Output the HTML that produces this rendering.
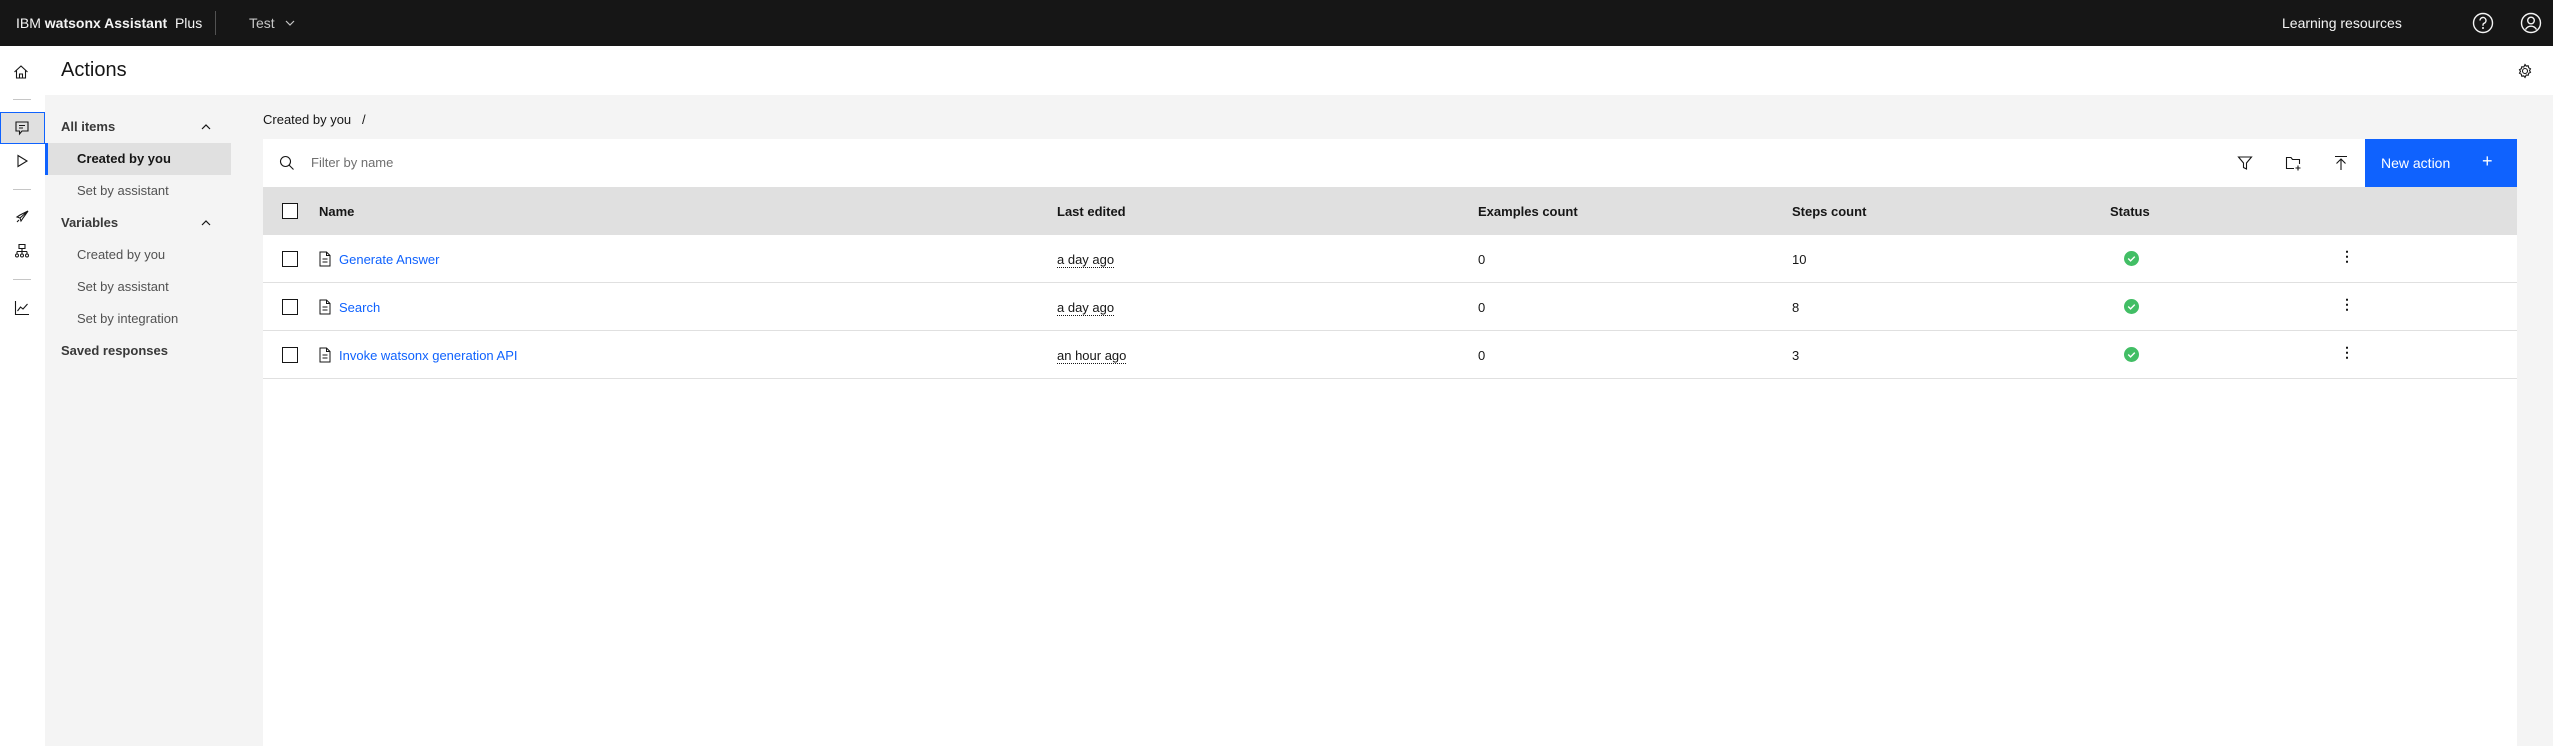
<!DOCTYPE html>
<html><head><meta charset="utf-8"><style>
*{box-sizing:border-box;margin:0;padding:0}
body{width:2553px;height:746px;overflow:hidden;background:#f4f4f4;font-family:"Liberation Sans",sans-serif;font-size:13px;color:#161616;position:relative}
.a{position:absolute}
.hdr{left:0;top:0;width:2553px;height:46px;background:#161616;color:#f4f4f4}
.rail{left:0;top:46px;width:45px;height:700px;background:#fff}
.tb{left:45px;top:46px;width:2508px;height:49px;background:#fff}
.nav div{position:absolute;white-space:nowrap}
.tbl{left:263px;top:139px;width:2254px;height:607px;background:#fff}
.th{top:48px;left:0;width:2254px;height:48px;background:#e0e0e0;font-weight:bold}
.row{left:0;width:2254px;height:48px;border-bottom:1px solid #e0e0e0}
.cb{width:16px;height:16px;border:1.5px solid #161616;background:#fff}
.lnk{color:#0f62fe}
.dt{border-bottom:1px dotted #161616}
svg{position:absolute}
</style></head><body>
<div class="a hdr">
 <div class="a" style="left:16px;top:15px;font-size:14px;white-space:nowrap">IBM <b>watsonx Assistant</b>&nbsp; Plus</div>
 <div class="a" style="left:215px;top:11px;width:1px;height:24px;background:#525252"></div>
 <div class="a" style="left:249px;top:15px;font-size:14px;color:#c6c6c6">Test</div>
 <svg style="left:284px;top:17px" width="12" height="12" viewBox="0 0 12 12"><path d="M2 4l4 4 4-4" fill="none" stroke="#c6c6c6" stroke-width="1.2"/></svg>
 <div class="a" style="left:2282px;top:15px;font-size:14px">Learning resources</div>
 <svg style="left:2472px;top:12px" width="22" height="22" viewBox="0 0 22 22"><circle cx="11" cy="11" r="9.5" fill="none" stroke="#f4f4f4" stroke-width="1.4"/><path d="M8 8.5a3 3 0 1 1 4 2.8c-.8.4-1 .9-1 1.7v.8" fill="none" stroke="#f4f4f4" stroke-width="1.4"/><circle cx="11" cy="16" r="1" fill="#f4f4f4"/></svg>
 <svg style="left:2520px;top:12px" width="22" height="22" viewBox="0 0 22 22"><circle cx="11" cy="11" r="9.5" fill="none" stroke="#f4f4f4" stroke-width="1.4"/><circle cx="11" cy="8.5" r="3.3" fill="none" stroke="#f4f4f4" stroke-width="1.4"/><path d="M5.5 17.5c1.5-2.5 3.3-3.3 5.5-3.3s4 .8 5.5 3.3" fill="none" stroke="#f4f4f4" stroke-width="1.4"/></svg>
</div>
<div class="a rail">
 <svg style="left:13px;top:18px" width="16" height="16" viewBox="0 0 16 16"><path d="M1.5 8L8 2l6.5 6M3.5 6.5V14h9V6.5M6.5 14V10h3v4" fill="none" stroke="#161616" stroke-width="1.1"/></svg>
 <div class="a" style="left:13px;top:53px;width:18px;height:1px;background:#c6c6c6"></div>
 <div class="a" style="left:0;top:66px;width:45px;height:32px;background:#e0e0e0;border:1.5px solid #0f62fe"></div>
 <svg style="left:14px;top:74px" width="16" height="16" viewBox="0 0 16 16"><path d="M2 2h12v9H8l-2.5 3V11H2z M5 5.5h6M5 8h4" fill="none" stroke="#161616" stroke-width="1.1"/></svg>
 <svg style="left:14px;top:107px" width="16" height="16" viewBox="0 0 16 16"><path d="M4 2.5v11L13 8z" fill="none" stroke="#161616" stroke-width="1.1"/></svg>
 <div class="a" style="left:13px;top:143px;width:18px;height:1px;background:#c6c6c6"></div>
 <svg style="left:14px;top:163px" width="16" height="16" viewBox="0 0 16 16"><path d="M14 2L6 6 3 8l3 1 1 3 2-3 5-7zM6 9l8-7M3 13l2-2" fill="none" stroke="#161616" stroke-width="1.1"/></svg>
 <svg style="left:14px;top:197px" width="16" height="16" viewBox="0 0 16 16"><path d="M5 1.5h6v4H5zM8 5.5v3M3 8.5h10M3 8.5v2M8 8.5v2M13 8.5v2" fill="none" stroke="#161616" stroke-width="1.1"/><circle cx="3" cy="12.5" r="1.5" fill="none" stroke="#161616"/><circle cx="8" cy="12.5" r="1.5" fill="none" stroke="#161616"/><circle cx="13" cy="12.5" r="1.5" fill="none" stroke="#161616"/></svg>
 <div class="a" style="left:13px;top:233px;width:18px;height:1px;background:#c6c6c6"></div>
 <svg style="left:14px;top:254px" width="16" height="16" viewBox="0 0 16 16"><path d="M1.5 1v13.5H15M3.5 11l3-4 2.5 2 4.5-5" fill="none" stroke="#161616" stroke-width="1.1"/></svg>
</div>
<div class="a tb">
 <div class="a" style="left:16px;top:13px;font-size:20px">Actions</div>
 <svg style="left:2472px;top:17px" width="16" height="16" viewBox="0 0 16 16"><circle cx="8" cy="8" r="2.5" fill="none" stroke="#161616" stroke-width="1.1"/><path d="M8 1.5l1.2 1.6 2-.3.5 2 1.8 1-1 1.7 1 1.8-1.8 1-.5 2-2-.3L8 14.5l-1.2-1.6-2 .3-.5-2-1.8-1 1-1.8-1-1.7 1.8-1 .5-2 2 .3z" fill="none" stroke="#161616" stroke-width="1.1"/></svg>
</div>
<div class="nav">
 <div style="left:61px;top:119px;font-weight:bold;color:#393939">All items</div>
 <svg style="left:200px;top:121px" width="12" height="12" viewBox="0 0 12 12"><path d="M2 8l4-4 4 4" fill="none" stroke="#161616" stroke-width="1.2"/></svg>
 <div style="left:45px;top:143px;width:186px;height:32px;background:#e0e0e0;border-left:3px solid #0f62fe"></div>
 <div style="left:77px;top:151px;font-weight:bold">Created by you</div>
 <div style="left:77px;top:183px;color:#525252">Set by assistant</div>
 <div style="left:61px;top:215px;font-weight:bold;color:#393939">Variables</div>
 <svg style="left:200px;top:217px" width="12" height="12" viewBox="0 0 12 12"><path d="M2 8l4-4 4 4" fill="none" stroke="#161616" stroke-width="1.2"/></svg>
 <div style="left:77px;top:247px;color:#525252">Created by you</div>
 <div style="left:77px;top:279px;color:#525252">Set by assistant</div>
 <div style="left:77px;top:311px;color:#525252">Set by integration</div>
 <div style="left:61px;top:343px;font-weight:bold;color:#393939">Saved responses</div>
</div>
<div class="a" style="left:263px;top:112px">Created by you&nbsp;&nbsp; /</div>
<div class="a tbl">
 <svg style="left:16px;top:16px" width="16" height="16" viewBox="0 0 16 16"><circle cx="6.5" cy="6.5" r="5" fill="none" stroke="#161616" stroke-width="1.1"/><path d="M10 10l4.5 4.5" stroke="#161616" stroke-width="1.1"/></svg>
 <div class="a" style="left:48px;top:16px;color:#6f6f6f">Filter by name</div>
 <svg style="left:1974px;top:16px" width="16" height="16" viewBox="0 0 16 16"><path d="M1.5 2h13L9.5 8v6l-3-1.5V8z" fill="none" stroke="#161616" stroke-width="1.1"/></svg>
 <svg style="left:2022px;top:16px" width="16" height="16" viewBox="0 0 16 16"><path d="M9 13.5H1.5V2.5h4.5l1.5 2H14.5V9M13 10.5v5M10.5 13h5" fill="none" stroke="#161616" stroke-width="1.1"/></svg>
 <svg style="left:2070px;top:16px" width="16" height="16" viewBox="0 0 16 16"><path d="M2 1.5h12M8 15V4M3.5 8.5L8 4l4.5 4.5" fill="none" stroke="#161616" stroke-width="1.1"/></svg>
 <div class="a" style="left:2102px;top:0;width:152px;height:48px;background:#0f62fe;color:#fff">
  <div class="a" style="left:16px;top:16px;font-size:14px">New action</div>
  <div class="a" style="left:117px;top:12px;font-size:18px">+</div>
 </div>
 <div class="a th">
  <div class="a cb" style="left:19px;top:16px"></div>
  <div class="a" style="left:56px;top:17px">Name</div>
  <div class="a" style="left:794px;top:17px">Last edited</div>
  <div class="a" style="left:1215px;top:17px">Examples count</div>
  <div class="a" style="left:1529px;top:17px">Steps count</div>
  <div class="a" style="left:1847px;top:17px">Status</div>
 </div>
 <div class="a row" style="top:96px"><div class="a cb" style="left:19px;top:16px"></div><svg style="left:56px;top:16px" width="12" height="16" viewBox="0 0 12 16"><path d="M1 1h6.5L11 4.5V15H1zM7.5 1v3.5H11M3.5 8h5M3.5 11h5" fill="none" stroke="#161616" stroke-width="1"/></svg><div class="a lnk" style="left:76px;top:17px">Generate Answer</div><div class="a" style="left:794px;top:17px"><span class="dt">a day ago</span></div><div class="a" style="left:1215px;top:17px">0</div><div class="a" style="left:1529px;top:17px">10</div><svg style="left:1861px;top:16px" width="15" height="15" viewBox="0 0 16 16"><circle cx="8" cy="8" r="8" fill="#42be65"/><path d="M4.5 8l2.5 2.5 4.5-4.5" fill="none" stroke="#fff" stroke-width="1.5"/></svg><div class="a" style="left:2077px;top:13px;font-weight:bold;font-size:14px">⋮</div></div>
 <div class="a row" style="top:144px"><div class="a cb" style="left:19px;top:16px"></div><svg style="left:56px;top:16px" width="12" height="16" viewBox="0 0 12 16"><path d="M1 1h6.5L11 4.5V15H1zM7.5 1v3.5H11M3.5 8h5M3.5 11h5" fill="none" stroke="#161616" stroke-width="1"/></svg><div class="a lnk" style="left:76px;top:17px">Search</div><div class="a" style="left:794px;top:17px"><span class="dt">a day ago</span></div><div class="a" style="left:1215px;top:17px">0</div><div class="a" style="left:1529px;top:17px">8</div><svg style="left:1861px;top:16px" width="15" height="15" viewBox="0 0 16 16"><circle cx="8" cy="8" r="8" fill="#42be65"/><path d="M4.5 8l2.5 2.5 4.5-4.5" fill="none" stroke="#fff" stroke-width="1.5"/></svg><div class="a" style="left:2077px;top:13px;font-weight:bold;font-size:14px">⋮</div></div>
 <div class="a row" style="top:192px"><div class="a cb" style="left:19px;top:16px"></div><svg style="left:56px;top:16px" width="12" height="16" viewBox="0 0 12 16"><path d="M1 1h6.5L11 4.5V15H1zM7.5 1v3.5H11M3.5 8h5M3.5 11h5" fill="none" stroke="#161616" stroke-width="1"/></svg><div class="a lnk" style="left:76px;top:17px">Invoke watsonx generation API</div><div class="a" style="left:794px;top:17px"><span class="dt">an hour ago</span></div><div class="a" style="left:1215px;top:17px">0</div><div class="a" style="left:1529px;top:17px">3</div><svg style="left:1861px;top:16px" width="15" height="15" viewBox="0 0 16 16"><circle cx="8" cy="8" r="8" fill="#42be65"/><path d="M4.5 8l2.5 2.5 4.5-4.5" fill="none" stroke="#fff" stroke-width="1.5"/></svg><div class="a" style="left:2077px;top:13px;font-weight:bold;font-size:14px">⋮</div></div>
</div>
</body></html>
